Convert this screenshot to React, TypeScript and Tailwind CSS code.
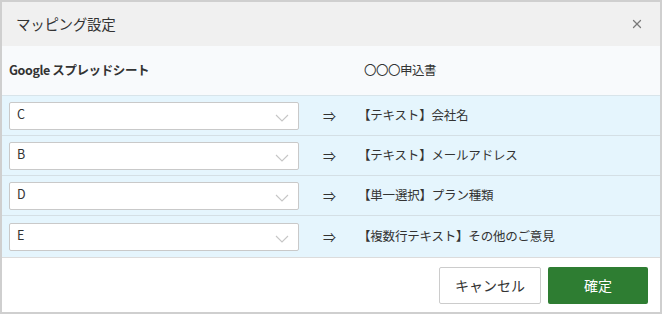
import { X } from 'lucide-react'

const rows = [
  { col: 'C', target: '【テキスト】会社名' },
  { col: 'B', target: '【テキスト】メールアドレス' },
  { col: 'D', target: '【単一選択】プラン種類' },
  { col: 'E', target: '【複数行テキスト】その他のご意見' },
]

function Chevron() {
  return (
    <svg width="14" height="8" viewBox="0 0 14 8" fill="none" className="shrink-0">
      <path d="M1 1l6 6 6-6" stroke="#c6c6c6" strokeWidth="1.1" />
    </svg>
  )
}

export default function App() {
  return (
    <div
      className="w-[662px] h-[314px] border-2 border-[#cfcfcf] bg-white flex flex-col text-[#333]"
      style={{ fontFamily: '"Noto Sans CJK JP", "Noto Sans", sans-serif' }}
    >
      {/* Header */}
      <div className="h-[44px] shrink-0 bg-[#f0f0f0] flex items-center justify-between pl-[14px] pr-[16px]">
        <span className="text-[14.5px] tracking-[-0.3px]">マッピング設定</span>
        <X size={14} strokeWidth={2.2} className="text-[#7a7a7a]" />
      </div>

      {/* Column titles */}
      <div className="h-[50px] shrink-0 bg-[#f8fafc] border-b border-[#d8e4ea] flex items-center text-[12.5px] font-bold">
        <div className="w-[298px] pl-[7px] tracking-[-0.4px]">Google スプレッドシート</div>
        <div className="w-[58px]" />
        <div className="pl-[6px] font-normal tracking-[-0.5px]">〇〇〇申込書</div>
      </div>

      {/* Rows */}
      <div className="bg-[#e5f5fd] border-b border-[#dcdcdc]">
        {rows.map((row, i) => (
          <div
            key={row.col}
            className={`h-[40px] flex items-center text-[12.5px] ${i < rows.length - 1 ? 'border-b border-[#d4dfe5]' : 'h-[41px]'}`}
          >
            <div className="ml-[7px] w-[290px] h-[28px] bg-white border border-[#c9c9c9] rounded-[2px] flex items-center justify-between pl-[7px] pr-[9px]">
              <span className="text-[12.5px] -mt-[2px]">{row.col}</span>
              <div className="mt-[5px]">
                <Chevron />
              </div>
            </div>
            <div className="w-[59px] text-center text-[13px] pl-[2px]">⇒</div>
            <div className="tracking-[-0.2px]">{row.target}</div>
          </div>
        ))}
      </div>

      {/* Footer */}
      <div className="flex-1 flex justify-end items-start pt-[9px] pr-[12px] gap-[7px]">
        <button className="w-[102px] h-[37px] border border-[#cccccc] bg-white text-[14px] rounded-[2px]">
          キャンセル
        </button>
        <button className="w-[100px] h-[37px] bg-[#2e7d32] text-white text-[14px] rounded-[2px]">
          確定
        </button>
      </div>
    </div>
  )
}
